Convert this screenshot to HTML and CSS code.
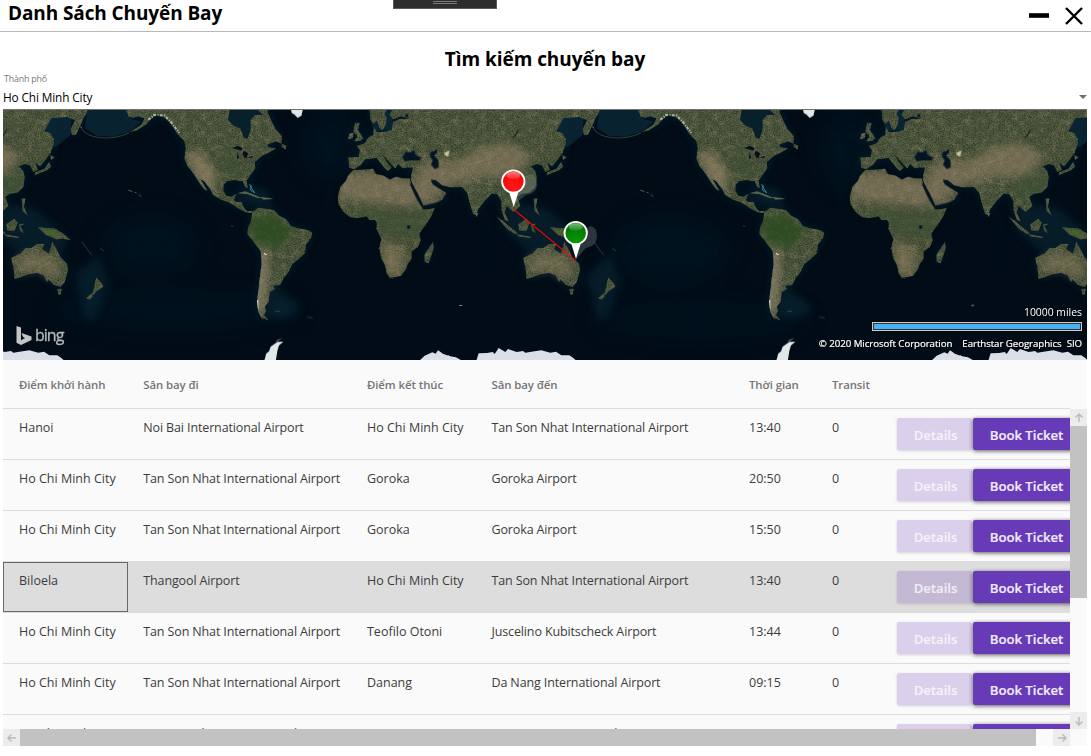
FILE: index.html
```html
<!DOCTYPE html>
<html lang="vi">
<head>
<meta charset="utf-8">
<title>Danh Sách Chuyến Bay</title>
<link rel="stylesheet" href="styles.css">
</head>
<body>
<header class="titlebar">
  <h1 class="title">Danh Sách Chuyến Bay</h1>
  <svg class="window-buttons" width="62" height="31" viewBox="0 0 62 31"><path d="M0 15.500h20" stroke="#000" stroke-width="4.600"/><path d="M37 8l16 16M53 8L37 24" stroke="#000" stroke-width="2.400"/></svg>
  <div class="grip"><i></i><i></i></div>
</header>
<main class="content">
  <h2 class="heading">Tìm kiếm chuyến bay</h2>
  <div class="city">
    <label class="city-label">Thành phố</label>
    <div class="city-value"><span>Ho Chi Minh City</span><i class="caret"></i></div>
  </div>
  <section class="map">
    <svg class="map-art" width="1084" height="250" viewBox="3 110 1084 250">
      <defs>
        <filter id="grain" x="0" y="0" width="100%" height="100%" color-interpolation-filters="sRGB">
          <feTurbulence type="fractalNoise" baseFrequency=".28" numOctaves="3" seed="8" result="n"/>
          <feColorMatrix in="n" values="0 0 0 0 .1  0 0 0 0 .14  0 0 0 0 .09  1.5 0 0 0 -.6" result="d"/>
          <feComposite in="d" in2="SourceAlpha" operator="in" result="dd"/>
          <feTurbulence type="fractalNoise" baseFrequency=".05" numOctaves="3" seed="3" result="m"/>
          <feColorMatrix in="m" values="0 0 0 0 .5  0 0 0 0 .48  0 0 0 0 .37  0 1.6 0 0 -.65" result="b"/>
          <feComposite in="b" in2="SourceAlpha" operator="in" result="bb"/>
          <feMerge><feMergeNode in="SourceGraphic"/><feMergeNode in="bb"/><feMergeNode in="dd"/></feMerge>
        </filter>
        <filter id="soft" x="-20%" y="-20%" width="140%" height="140%"><feGaussianBlur stdDeviation="12"/></filter>
        <filter id="rough" x="-5%" y="-5%" width="110%" height="110%"><feTurbulence type="fractalNoise" baseFrequency=".12" numOctaves="2" seed="5"/><feDisplacementMap in="SourceGraphic" scale="5" xChannelSelector="R" yChannelSelector="G"/></filter>
        <radialGradient id="redBall" cx=".5" cy=".8" r=".8"><stop offset="0" stop-color="#ff1a1a"/><stop offset="1" stop-color="#f40000"/></radialGradient>
        <radialGradient id="greenBall" cx=".5" cy=".9" r=".8"><stop offset="0" stop-color="#0b980b"/><stop offset="1" stop-color="#007400"/></radialGradient>
        <linearGradient id="gloss" x2="0" y2="1"><stop offset="0" stop-color="#fff" stop-opacity=".5"/><stop offset="1" stop-color="#fff" stop-opacity=".08"/></linearGradient>
        <clipPath id="landClip">
          <use href="#eurasia"/><use href="#africa"/>
        </clipPath>
        <clipPath id="southClip"><use href="#samerica"/></clipPath>
        <clipPath id="northClip"><use href="#namerica"/></clipPath>
        <path id="namerica" d="M378 8L386 35 400 38 415 34 434 40 425 58 405 72 388 82 410 76 440 58 447 48 470 29 495 38 513 58 533 88 553 108 558 130 553 160 562 182 580 205 597 232 612 252 622 257 608 234 600 222 612 228 629 250 640 270 665 285 690 293 712 308 735 321 753 324 757 318 741 318 729 304 726 292 708 292 700 284 709 267 693 275 678 272 670 257 671 238 682 228 703 225 728 228 736 246 743 248 740 226 754 207 766 190 764 172 786 152 810 141 828 130 806 127 800 119 830 109 848 118 859 122 857 133 845 126 845 92 826 73 812 42 802 20 806 8Z"/>
        <path id="samerica" d="M757 321L775 308 800 312 822 316 839 334 859 343 872 363 900 371 925 376 936 383 933 400 918 418 915 445 896 461 877 477 866 500 851 519 840 540 820 542 825 552 809 562 806 590 795 604 797 620 792 631 805 645 785 640 775 621 771 590 776 550 779 520 785 476 782 438 762 412 742 386 744 370 754 346Z"/>
        <path id="africa" d="M160 195L190 194 219 191 227 207 250 212 270 224 288 215 306 220 330 221 332 240 346 271 361 298 371 313 388 313 404 308 395 332 372 365 358 386 362 406 357 421 335 440 335 461 323 478 318 493 303 512 270 519 260 504 255 480 244 460 238 429 244 403 230 371 231 353 225 345 208 345 201 334 174 339 151 337 130 320 116 298 113 276 122 245 137 229 145 211Z"/>
        <path id="eurasia" d="M176 157L180 135 171 123 194 115 205 98 219 90 222 65 231 82 256 80 276 74 279 51 300 42 329 41 304 34 280 43 268 29 282 8 905 8 887 38 876 64 864 89 852 90 848 72 862 45 837 36 790 40 768 79 788 84 797 112 788 143 769 169 756 184 742 173 750 195 736 201 726 181 709 177 692 184 705 197 710 215 706 245 690 262 665 266 651 275 661 302 641 321 620 303 614 323 626 349 615 345 606 321 604 289 592 267 574 266 551 292 534 313 528 330 519 326 507 286 502 264 486 246 452 247 426 240 406 224 392 229 413 248 439 264 427 284 391 303 370 305 356 270 342 247 333 224 336 201 339 187 308 190 294 177 286 190 274 178 247 148 260 171 275 188 263 198 253 188 230 158 211 161 195 163 182 180 163 193 148 188 145 157Z"/>
        <g id="islands">
          <path d="M165 53L179 54 174 75 190 100 181 108 163 109 173 94 160 80ZM149 85L160 84 159 99 144 103ZM211 8L211 44 220 56 231 47 238 68 248 75 257 59 260 39 253 28 264 8ZM399 411L401 430 386 475 374 470 374 448 385 432ZM790 85L798 118 792 133ZM786 150L801 157 790 164ZM783 171L790 185 777 196 756 204 740 211 742 202 769 192ZM525 320L535 324 530 336ZM590 335L608 347 653 385 646 388 621 372ZM650 388L693 395 691 399 654 394ZM655 358L679 341 689 353 678 379 658 376ZM693 357L710 356 698 363 707 383 696 378ZM701 279L712 281 708 305 718 331 704 318ZM749 366L771 369 798 370 824 385 849 406 825 401 805 403 774 390ZM670 458L699 445 713 429 731 429 747 417 768 417 762 433 783 447 793 410 804 430 816 455 837 476 840 495 830 531 818 546 797 539 783 522 776 530 767 511 748 503 719 508 699 516 680 522 676 486ZM808 552L822 551 817 569 811 568ZM925 518L941 534 946 545 926 558 905 584 894 580 914 563Z"/>
        </g>
        <path id="blackSea" d="M307 157L317 140 331 142 343 135 346 148 362 158 360 166 330 166 315 170ZM391 143L411 133 412 143 402 151 415 165 416 187 404 192 393 179 398 165 390 155ZM320 362L331 361 330 370 323 373ZM626 98L642 95 652 78 656 70 654 82 643 98ZM315 32L322 25 326 35 318 38Z"/>
        <g id="world">
          <g transform="translate(300 105) scale(.33333)">
            <g fill="#0d3040" opacity=".45" filter="url(#soft)"><use href="#eurasia"/><use href="#islands"/><path d="M610 295L740 310 840 400 820 440 690 440 620 380ZM930 450L960 530 925 630 895 650 860 510Z"/></g>
            <g fill="#0c2c3c" opacity=".7"><path d="M770 40L850 36 848 90 800 130 790 84 768 79ZM205 15H280L276 74 222 80Z"/></g>
            <g opacity=".2" fill="none" stroke="#1a3d43" stroke-width="5" filter="url(#soft)"><path d="M30 50Q110 130 90 250T180 570M550 310Q580 430 555 550M470 620Q520 680 540 710M970 410Q1020 470 930 620"/></g>
            <g filter="url(#rough)"><g fill="#4d583e" filter="url(#grain)"><use href="#eurasia"/><use href="#africa"/><use href="#islands"/></g></g>
            <g clip-path="url(#landClip)">
              <g filter="url(#soft)"><path d="M110 210Q250 190 335 230L380 165 465 170 535 130 610 110 700 150 650 210 540 220 460 235 380 300 300 300 115 285Z" fill="#958268" opacity=".55"/><path d="M140 305L370 315 385 355 350 400 250 400 220 350Z" fill="#3a5030" opacity=".6"/><path d="M235 410L310 430 310 510 260 510Z" fill="#9a8565" opacity=".5"/><path d="M620 205L720 190 710 270 650 300 600 260Z" fill="#3a4f30" opacity=".5"/></g>
              <path d="M500 190Q515 235 580 240M505 180Q540 170 565 160" stroke="#d8d5cb" stroke-width="2" stroke-dasharray="5 3" fill="none" opacity=".45"/>
              <path d="M433 143L449 136 445 155 434 151Z" fill="#eee9b8" opacity=".75"/>
            </g>
            <path d="M685 460L730 440 800 455 820 485 790 525 750 495 700 505Z" fill="#9b866b" opacity=".42" filter="url(#soft)"/>
            <path d="M760 374L795 375 820 388 800 397 778 386Z" fill="#42691e" opacity=".55"/>
            <g fill="#031522"><use href="#blackSea"/><path d="M329 235L338 238 370 302 412 292 410 300 370 313 352 285ZM392 222L403 226 411 242 428 244 420 250 399 239Z"/></g>
            <path d="M355 770L374 752 397 742 407 746 414 736 430 747 451 754 468 757 491 770ZM528 770L536 745 561 744 578 741 584 747 596 729 616 741 624 732 650 741 669 738 676 743 704 739 724 736 751 743 768 740 784 751 808 751 821 760 832 770Z" fill="#d9dee9" filter="url(#rough)"/>
            <path d="M478 602L486 601M877 65l4 3" stroke="#8a9a90" stroke-width="3"/>
          </g>
          <g transform="translate(0 105) scale(.33333)">
            <g fill="#103442" opacity=".45" filter="url(#soft)"><use href="#namerica"/><use href="#samerica"/><path d="M735 240L800 255 820 310 770 300 700 280ZM820 545L905 610 860 640 800 635Z"/></g>
            <path d="M262 15H385L388 40 425 50 390 80 340 95 290 92 255 70Z" fill="#0b2a39" opacity=".75"/>
            <g filter="url(#rough)"><g fill="#4d583e" filter="url(#grain)"><use href="#namerica"/><use href="#samerica"/></g></g>
            <g clip-path="url(#southClip)"><path d="M750 340L820 330 880 380 850 415 790 430 750 385Z" fill="#284b1c" opacity=".75" filter="url(#soft)"/><path d="M782 420L805 440 800 540 785 630 760 620Z" fill="#ac9880" opacity=".6" filter="url(#soft)"/><path d="M773 585V615M792 445L800 450" stroke="#eee" stroke-width="4" opacity=".8"/></g>
            <g clip-path="url(#northClip)"><path d="M560 145L605 140 650 210 635 270 590 220Z" fill="#a18c6e" opacity=".6" filter="url(#soft)"/><path d="M720 150L740 220 690 220 650 150Z" fill="#344d2d" opacity=".4" filter="url(#soft)"/></g>
            <g fill="#06202c"><path d="M690 8L684 45 701 62 722 71 731 98 742 101 752 76 752 45 765 30 790 29 765 8Z"/><path d="M697 130L714 122 728 130 724 137 708 133ZM713 143L718 160 711 161ZM730 137L745 145 738 161 728 149ZM739 158L758 153 759 158Z" fill="#061019"/></g>
            <path d="M445 44L462 30 493 31 514 52 538 84" fill="none" stroke="#d1d6d0" stroke-width="6" stroke-dasharray="8 5 3 4" opacity=".75" filter="url(#rough)"/>
            <path d="M712 265L735 259 760 268 783 278 774 280 743 268ZM780 276L806 278 821 282 790 284Z" fill="#53634a"/>
            <path d="M747 239l7 3-3 13 14 8M751 243l12 20" stroke="#3b97aa" fill="none" stroke-width="3" opacity=".8"/>
            <path d="M245 70Q255 93 300 98T387 84" stroke="#4a5a4c" stroke-width="2" fill="none"/>
            <path d="M385 255l12 5m7 2l6 2m7 4l6 7" stroke="#506253" stroke-width="3"/>
            <path d="M245 410l30 40m25-20l12 8m380-76l8 2m126 255h14m82 16l16 5" stroke="#54645a" stroke-width="2.500" opacity=".6"/>
            <path d="M872 8H910L904 32 893 39 884 29 875 24ZM792 770L799 745 807 739 812 725 832 711 850 710 837 721 832 738 827 770ZM825 710L848 697 834 707Z" fill="#e1e7e9" filter="url(#rough)"/>
          </g>
        </g>
      </defs>
      <rect x="3" y="110" width="1084" height="250" fill="#010c17"/>
      <g filter="url(#soft)" fill="#03202d" opacity=".28"><ellipse cx="175" cy="310" rx="125" ry="18"/><ellipse cx="330" cy="145" rx="30" ry="35"/><ellipse cx="150" cy="245" rx="50" ry="30"/><ellipse cx="670" cy="250" rx="60" ry="35"/><ellipse cx="700" cy="320" rx="110" ry="15"/><ellipse cx="850" cy="150" rx="30" ry="40"/></g>
      <use href="#world" x="-512"/><use href="#world"/><use href="#world" x="512"/>
      <path d="M514 204Q515 188 523 178Q535 170 537 182Q538 193 526 195ZM577 258Q579 241 585 231Q590 222 596 230Q600 245 586 248Z" fill="#87908d" opacity=".32"/>
      <g><path d="M508.500 190L513.700 207 519 190Z" fill="#fff"/><circle cx="513.300" cy="181.500" r="11.200" fill="url(#redBall)" stroke="#fff" stroke-width="1.800"/><ellipse cx="513.300" cy="175.500" rx="7" ry="3.800" fill="url(#gloss)"/></g>
      <g><path d="M570.500 241L576 259 581.500 241Z" fill="#fff"/><circle cx="575.700" cy="233" r="11.200" fill="url(#greenBall)" stroke="#fff" stroke-width="1.800"/><ellipse cx="575.700" cy="227" rx="7" ry="3.800" fill="url(#gloss)"/></g>
      <path d="M513.800 209.500L575.800 260.700" stroke="#f00" stroke-width="1.100"/>
    </svg>
    <div class="bing"><svg width="16" height="19" viewBox="0 0 16 19"><path fill-rule="evenodd" d="M.5 0L5 1.600V14.300L9 12 7 11 5.500 7 15.500 10.500V14L5 19 .5 16.700Z" fill="#c2c4c5"/></svg><span>bing</span></div>
    <div class="scale"><span class="miles">10000 miles</span><div class="scale-bar"></div><div class="credits"><span>© 2020 Microsoft Corporation</span><span>Earthstar Geographics</span><span>SIO</span></div></div>
  </section>
  <section class="grid">
    <div class="row head"><span>Điểm khởi hành</span><span>Sân bay đi</span><span>Điểm kết thúc</span><span>Sân bay đến</span><span>Thời gian</span><span>Transit</span></div>
    <div class="body">
      <div class="rows">
        <div class="row"><span>Hanoi</span><span>Noi Bai International Airport</span><span>Ho Chi Minh City</span><span>Tan Son Nhat International Airport</span><span>13:40</span><span>0</span><div class="actions"><button class="details">Details</button><button class="book">Book Ticket</button></div></div>
        <div class="row"><span>Ho Chi Minh City</span><span>Tan Son Nhat International Airport</span><span>Goroka</span><span>Goroka Airport</span><span>20:50</span><span>0</span><div class="actions"><button class="details">Details</button><button class="book">Book Ticket</button></div></div>
        <div class="row"><span>Ho Chi Minh City</span><span>Tan Son Nhat International Airport</span><span>Goroka</span><span>Goroka Airport</span><span>15:50</span><span>0</span><div class="actions"><button class="details">Details</button><button class="book">Book Ticket</button></div></div>
        <div class="row selected"><span class="focused">Biloela</span><span>Thangool Airport</span><span>Ho Chi Minh City</span><span>Tan Son Nhat International Airport</span><span>13:40</span><span>0</span><div class="actions"><button class="details">Details</button><button class="book">Book Ticket</button></div></div>
        <div class="row"><span>Ho Chi Minh City</span><span>Tan Son Nhat International Airport</span><span>Teofilo Otoni</span><span>Juscelino Kubitscheck Airport</span><span>13:44</span><span>0</span><div class="actions"><button class="details">Details</button><button class="book">Book Ticket</button></div></div>
        <div class="row"><span>Ho Chi Minh City</span><span>Tan Son Nhat International Airport</span><span>Danang</span><span>Da Nang International Airport</span><span>09:15</span><span>0</span><div class="actions"><button class="details">Details</button><button class="book">Book Ticket</button></div></div>
        <div class="row"><span>Ho Chi Minh City</span><span>Tan Son Nhat International Airport</span><span>Danang</span><span>Da Nang International Airport</span><span>09:15</span><span>0</span><div class="actions"><button class="details"></button><button class="book"></button></div></div>
      </div>
      <div class="vscroll"><svg class="arrow" viewBox="0 0 17 17"><path d="M9 13V5M5.500 8.500L9 5l3.500 3.500"/></svg><div class="vthumb"></div><svg class="arrow" viewBox="0 0 17 17"><path d="M9 5v8M5.500 9.500L9 13l3.500-3.500"/></svg></div>
    </div>
    <div class="hscroll"><svg class="arrow" viewBox="0 0 17 17"><path d="M13 9H5M8.500 5.500L5 9l3.500 3.500"/></svg><div class="hthumb"></div><svg class="arrow" viewBox="0 0 17 17"><path d="M5 9h8M9.500 5.500L13 9l-3.500 3.500"/></svg></div>
  </section>
</main>
</body>
</html>
```
FILE: styles.css
```css
* { box-sizing: border-box; }
body { margin: 0; width: 1091px; height: 756px; overflow: hidden; background: #fff; font-family: "Open Sans", "Noto Sans", sans-serif; color: #000; }
h1, h2 { margin: 0; font-weight: 700; white-space: nowrap; }
.titlebar { position: relative; display: flex; justify-content: space-between; height: 32px; border-bottom: 1px solid #b9b9b9; }
.title { padding-left: 8px; font-size: 19px; line-height: 27px; letter-spacing: -.1px; }
.window-buttons { display: block; }
.grip { position: absolute; left: 393px; top: 0; width: 104px; height: 9px; display: flex; flex-direction: column; align-items: center; gap: 1px; padding-top: 1px; background: #2d2d30; border: 1px solid #5a5a5c; border-top: 0; }
.grip i { width: 24px; height: 1px; background: #77777a; }
.content { padding: 0 4px 0 3px; }
.heading { padding-top: 11px; height: 42px; text-align: center; font-size: 19px; line-height: 32px; letter-spacing: -.05px; }
.city { height: 36px; border-bottom: 1px solid #707070; }
.city-label { display: block; height: 13px; padding-left: 1px; font-size: 8.8px; line-height: 11px; letter-spacing: -.15px; color: #777; }
.city-value { display: flex; justify-content: space-between; align-items: center; height: 20px; font-size: 11.8px; line-height: 20px; letter-spacing: -.12px; }
.caret { border: 4px solid transparent; border-top-color: #707070; border-bottom: 0; }
.map { position: relative; height: 250px; overflow: hidden; color: #fff; }
.map-art { display: block; }
.bing { position: absolute; left: 13px; top: 216px; display: flex; gap: 3px; color: #b6bbbd; font-size: 16px; line-height: 19px; letter-spacing: -1px; -webkit-text-stroke: .3px #b6bbbd; }
.scale { position: absolute; right: 5px; top: 194px; width: 270px; display: flex; flex-direction: column; align-items: flex-end; font-size: 10.4px; line-height: 16px; white-space: nowrap; text-shadow: 1px 1px 1px #000; }
.scale-bar { width: 210px; height: 9px; margin: 2px 0 5px; border: 1px solid #ccc; background: #48b0f5; box-shadow: inset 0 0 0 1px #333; }
.credits { display: flex; gap: 5px; font-size: 9.7px; line-height: 16px; letter-spacing: -.06px; -webkit-text-stroke: .2px #fff; }
.credits span:first-child { margin-right: 5px; }
.grid { height: 386px; background: #fafafa; }
.row { display: grid; grid-template-columns: 124.3px 223.7px 124.5px 257.5px 83px 81px 183px; height: 51px; border-bottom: 1px solid #ddd; font-size: 12.5px; line-height: 17px; color: #3c3c3c; white-space: nowrap; }
.row > span { padding: 10px 0 0 16px; }
.body .row > span:nth-child(2), .body .row > span:nth-child(4) { letter-spacing: -.13px; }
.head { width: 1067px; height: 49px; overflow: hidden; color: #757575; font-size: 11.4px; font-weight: 600; letter-spacing: -.08px; }
.head > span { padding-top: 16px; }
.body { display: flex; height: 320px; }
.rows { width: 1067px; overflow: hidden; }
.selected { margin-top: -1px; height: 52px; background: #ddd; }
.row > .focused { width: 125px; height: 50px; margin-top: 1px; padding-top: 9px; padding-left: 15px; border: 1px solid #676767; }
.selected > span { padding-top: 11px; }
.actions { display: flex; gap: 1px; padding-top: 9px; }
.selected .actions { padding-top: 10px; }
.actions button { flex: none; height: 32px; padding: 2px 0 0; border: 0; border-radius: 2px; font: 600 13.2px/30px "Open Sans", sans-serif; letter-spacing: -.05px; -webkit-text-stroke: .2px currentColor; }
.actions .details { width: 75px; padding-left: 2px; background: rgba(103,58,183,.22); color: rgba(255,255,255,.72); box-shadow: 0 1px 3px rgba(0,0,0,.16); }
.actions .book { width: 107px; background: #673ab7; color: #f0ebf8; box-shadow: 0 1px 4px rgba(0,0,0,.65); }
.vscroll { width: 17px; display: flex; flex-direction: column; justify-content: space-between; }
.vthumb { height: 172px; margin-bottom: 114px; background: #c2c2c2; }
.hscroll { display: flex; width: 1067px; height: 17px; }
.hthumb { width: 1016px; margin-right: 17px; background: #c2c2c2; }
.arrow { flex: none; width: 17px; height: 17px; background: #ececec; fill: none; stroke: #bbb; stroke-width: 1.5; }
```
